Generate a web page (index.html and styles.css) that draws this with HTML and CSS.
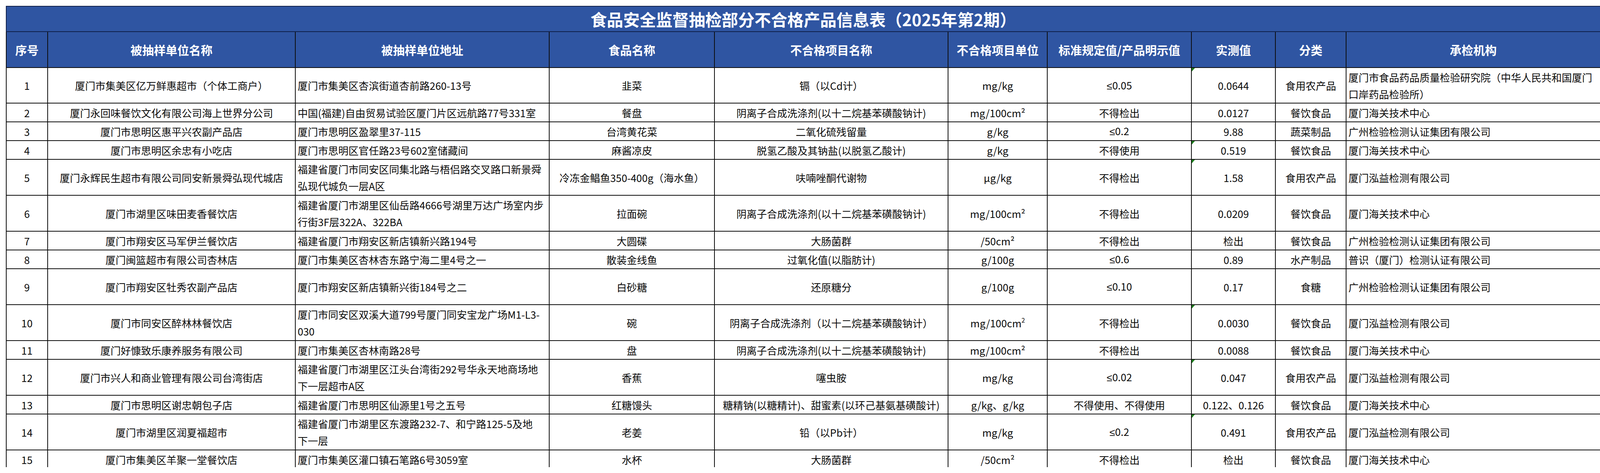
FILE: index.html
```html
<!DOCTYPE html>
<html lang="zh-CN">
<head>
<meta charset="utf-8">
<title>食品安全监督抽检部分不合格产品信息表（2025年第2期）</title>
<link rel="stylesheet" href="styles.css">
</head>
<body>
<div class="sheet">
<table class="report">
<colgroup>
<col class="c-no"><col class="c-name"><col class="c-addr"><col class="c-food"><col class="c-item"><col class="c-unit"><col class="c-std"><col class="c-val"><col class="c-cat"><col class="c-org">
</colgroup>
<thead>
<tr class="r-title"><th class="title" colspan="10">食品安全监督抽检部分不合格产品信息表（2025年第2期）</th></tr>
<tr class="r-head">
<th>序号</th><th>被抽样单位名称</th><th>被抽样单位地址</th><th>食品名称</th><th>不合格项目名称</th><th>不合格项目单位</th><th>标准规定值/产品明示值</th><th>实测值</th><th>分类</th><th>承检机构</th>
</tr>
</thead>
<tbody>
<tr class="r-first">
<td>1</td><td>厦门市集美区亿万鲜惠超市（个体工商户）</td><td class="l">厦门市集美区杏滨街道杏前路260-13号</td><td>韭菜</td><td>镉（以Cd计）</td><td>mg/kg</td><td><span class="le">≤</span>0.05</td><td class="m"><span class="flag"></span>0.0644</td><td>食用农产品</td><td class="l">厦门市食品药品质量检验研究院（中华人民共和国厦门<br>口岸药品检验所）</td>
</tr>
<tr class="r1">
<td>2</td><td>厦门永回味餐饮文化有限公司海上世界分公司</td><td class="l">中国(福建)自由贸易试验区厦门片区远航路77号331室</td><td>餐盘</td><td>阴离子合成洗涤剂(以十二烷基苯磺酸钠计)</td><td>mg/100cm²</td><td>不得检出</td><td class="m">0.0127</td><td>餐饮食品</td><td class="l">厦门海关技术中心</td>
</tr>
<tr class="r1">
<td>3</td><td>厦门市思明区惠平兴农副产品店</td><td class="l">厦门市思明区盈翠里37-115</td><td>台湾黄花菜</td><td>二氧化硫残留量</td><td>g/kg</td><td><span class="le">≤</span>0.2</td><td class="m">9.88</td><td>蔬菜制品</td><td class="l">广州检验检测认证集团有限公司</td>
</tr>
<tr class="r1">
<td>4</td><td>厦门市思明区余忠有小吃店</td><td class="l">厦门市思明区官任路23号602室储藏间</td><td>麻酱凉皮</td><td>脱氢乙酸及其钠盐(以脱氢乙酸计)</td><td>g/kg</td><td>不得使用</td><td class="m"><span class="flag"></span>0.519</td><td>餐饮食品</td><td class="l">厦门海关技术中心</td>
</tr>
<tr class="r2">
<td>5</td><td>厦门永辉民生超市有限公司同安新景舜弘现代城店</td><td class="l">福建省厦门市同安区同集北路与梧侣路交叉路口新景舜<br>弘现代城负一层A区</td><td>冷冻金鲳鱼350-400g（海水鱼）</td><td>呋喃唑酮代谢物</td><td>μg/kg</td><td>不得检出</td><td class="m"><span class="flag"></span>1.58</td><td>食用农产品</td><td class="l">厦门泓益检测有限公司</td>
</tr>
<tr class="r2">
<td>6</td><td>厦门市湖里区味田麦香餐饮店</td><td class="l">福建省厦门市湖里区仙岳路4666号湖里万达广场室内步<br>行街3F层322A、322BA</td><td>拉面碗</td><td>阴离子合成洗涤剂(以十二烷基苯磺酸钠计)</td><td>mg/100cm²</td><td>不得检出</td><td class="m">0.0209</td><td>餐饮食品</td><td class="l">厦门海关技术中心</td>
</tr>
<tr class="r1">
<td>7</td><td>厦门市翔安区马军伊兰餐饮店</td><td class="l">福建省厦门市翔安区新店镇新兴路194号</td><td>大圆碟</td><td>大肠菌群</td><td>/50cm²</td><td>不得检出</td><td class="m">检出</td><td>餐饮食品</td><td class="l">广州检验检测认证集团有限公司</td>
</tr>
<tr class="r1">
<td>8</td><td>厦门闽篮超市有限公司杏林店</td><td class="l">厦门市集美区杏林杏东路宁海二里4号之一</td><td>散装金线鱼</td><td>过氧化值(以脂肪计)</td><td>g/100g</td><td><span class="le">≤</span>0.6</td><td class="m">0.89</td><td>水产制品</td><td class="l">普识（厦门）检测认证有限公司</td>
</tr>
<tr class="r2">
<td>9</td><td>厦门市翔安区牡秀农副产品店</td><td class="l">厦门市翔安区新店镇新兴街184号之二</td><td>白砂糖</td><td>还原糖分</td><td>g/100g</td><td><span class="le">≤</span>0.10</td><td class="m">0.17</td><td>食糖</td><td class="l">广州检验检测认证集团有限公司</td>
</tr>
<tr class="r2">
<td>10</td><td>厦门市同安区醉林林餐饮店</td><td class="l">厦门市同安区双溪大道799号厦门同安宝龙广场M1-L3-<br>030</td><td>碗</td><td>阴离子合成洗涤剂（以十二烷基苯磺酸钠计）</td><td>mg/100cm<sup class="sup">2</sup></td><td>不得检出</td><td class="m"><span class="flag"></span>0.0030</td><td>餐饮食品</td><td class="l">厦门泓益检测有限公司</td>
</tr>
<tr class="r1">
<td>11</td><td>厦门好慷致乐康养服务有限公司</td><td class="l">厦门市集美区杏林南路28号</td><td>盘</td><td>阴离子合成洗涤剂(以十二烷基苯磺酸钠计)</td><td>mg/100cm²</td><td>不得检出</td><td class="m">0.0088</td><td>餐饮食品</td><td class="l">厦门海关技术中心</td>
</tr>
<tr class="r2">
<td>12</td><td>厦门市兴人和商业管理有限公司台湾街店</td><td class="l">福建省厦门市湖里区江头台湾街292号华永天地商场地<br>下一层超市A区</td><td>香蕉</td><td>噻虫胺</td><td>mg/kg</td><td><span class="le">≤</span>0.02</td><td class="m"><span class="flag"></span>0.047</td><td>食用农产品</td><td class="l">厦门泓益检测有限公司</td>
</tr>
<tr class="r1">
<td>13</td><td>厦门市思明区谢忠朝包子店</td><td class="l">福建省厦门市思明区仙源里1号之五号</td><td>红糖馒头</td><td>糖精钠(以糖精计)、甜蜜素(以环己基氨基磺酸计)</td><td>g/kg、g/kg</td><td>不得使用、不得使用</td><td class="m">0.122、0.126</td><td>餐饮食品</td><td class="l">厦门海关技术中心</td>
</tr>
<tr class="r2">
<td>14</td><td>厦门市湖里区润夏福超市</td><td class="l">福建省厦门市湖里区东渡路232-7、和宁路125-5及地<br>下一层</td><td>老姜</td><td>铅（以Pb计）</td><td>mg/kg</td><td><span class="le">≤</span>0.2</td><td class="m"><span class="flag"></span>0.491</td><td>食用农产品</td><td class="l">厦门泓益检测有限公司</td>
</tr>
<tr class="r1">
<td>15</td><td>厦门市集美区羊聚一堂餐饮店</td><td class="l">厦门市集美区灌口镇石笔路6号3059室</td><td>水杯</td><td>大肠菌群</td><td>/50cm²</td><td>不得检出</td><td class="m">检出</td><td>餐饮食品</td><td class="l">厦门海关技术中心</td>
</tr>
</tbody>
</table>
</div>
</body>
</html>
```

FILE: styles.css
```css
html, body {
  margin: 0;
  padding: 0;
  background: #ffffff;
}

body {
  font-family: "Noto Sans CJK SC", "Microsoft YaHei", sans-serif;
  color: #0a0a0a;
}

.sheet {
  box-sizing: border-box;
  height: 1196px;
  overflow: hidden;
  padding: 15px 16px 0 15px;
}

.report {
  border-collapse: collapse;
  table-layout: fixed;
  width: 4081px;
}

.c-no { width: 106px; }
.c-name { width: 634px; }
.c-addr { width: 650px; }
.c-food { width: 423px; }
.c-item { width: 598px; }
.c-unit { width: 254px; }
.c-std { width: 369px; }
.c-val { width: 215px; }
.c-cat { width: 181px; }
.c-org { width: 651px; }

.report th,
.report td {
  border: 2px solid #0d0d0d;
  padding: 0 4px;
  font-size: 26px;
  line-height: 43px;
  text-align: center;
  vertical-align: middle;
  white-space: nowrap;
  overflow: hidden;
  font-weight: 400;
}

.r-title { height: 65px; }
.r-head { height: 92px; }
.r-first { height: 91px; }
.r1 { height: 48px; }
.r2 { height: 92px; }

.report th {
  background: #2f55a2;
  color: #ffffff;
  font-size: 30px;
  font-weight: 700;
}

.report th.title {
  font-size: 42px;
  line-height: 60px;
  border-color: #10204a;
}

.report td.l {
  text-align: left;
  padding-left: 5px;
}

.report td.m {
  position: relative;
}

.le {
  font-family: "Liberation Sans", "DejaVu Sans", sans-serif;
}

.flag {
  position: absolute;
  top: 0;
  left: 0;
  width: 0;
  height: 0;
  border-top: 9px solid #1d7f1d;
  border-right: 8px solid transparent;
}

.sup {
  font-size: 16px;
  line-height: 0;
  vertical-align: 12px;
}
```
